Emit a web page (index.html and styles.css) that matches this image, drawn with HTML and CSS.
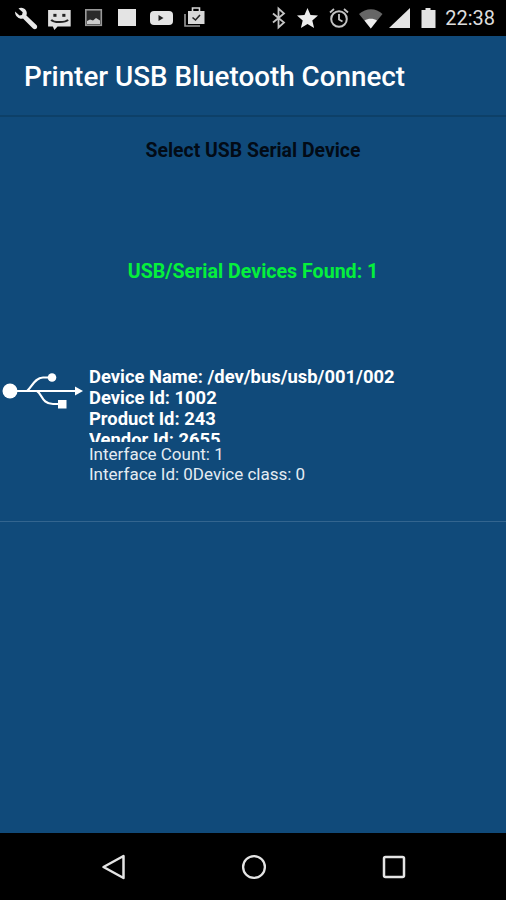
FILE: index.html
```html
<!DOCTYPE html>
<html lang="en">
<head>
    <meta charset="UTF-8">
    <meta name="viewport" content="width=device-width, initial-scale=1.0">
    <title>Printer USB Bluetooth Connect</title>
    <link rel="stylesheet" href="styles.css">
</head>
<body>
    <div class="status-bar">
        <!-- notification icons -->
        <svg class="icon" width="192" height="36" viewBox="14 0 192 36">
            <path transform="translate(12 6)" d="M3 5.500l4.500 4 2.500-.6.7-2.600L6.500 2.500C9 1 12.500 2 14 4.500c1 1.700 1 3.500.4 5l10 9.500c1 1 1 2.500.1 3.500s-2.500 1-3.500 0l-10-10c-1.800.6-3.800.2-5.300-1.200C4 10.300 3 8 3 5.500z" fill="#e8e8e8"/>
            <g transform="translate(46 7) scale(1.05 .98)">
                <path d="M2 3h21.500v17H11L8 23.500 6.500 20H2z" fill="#e0e0e0"/>
                <rect x="7" y="7" width="3" height="3" fill="#222"/>
                <rect x="15.500" y="7" width="3" height="3" fill="#222"/>
                <path d="M5 13c2 3.200 13.500 3.200 16 0" stroke="#222" stroke-width="2" fill="none"/>
            </g>
            <rect x="85.800" y="9.800" width="15.500" height="15.500" fill="#2a2a2a" stroke="#999" stroke-width="1.600"/>
            <path d="M87 23v-2l3-1.500 3 1 3-2.500 4 2.500V24H87z" fill="#ccc"/>
            <rect x="118" y="9" width="18" height="17" fill="#e4e4e4"/>
            <rect x="150" y="11" width="23" height="14" rx="4" fill="#e4e4e4"/>
            <path d="M158.500 15l5 3-5 3z" fill="#222"/>
            <path d="M185 14v12h15" stroke="#999" stroke-width="1.600" fill="none"/>
            <rect x="188" y="11" width="16.500" height="13" fill="#d8d8d8"/>
            <path d="M192.500 11V8h7v3" stroke="#d8d8d8" stroke-width="1.600" fill="none"/>
            <path d="M192.500 17.500l3 2.500 4.500-5" stroke="#222" stroke-width="1.600" fill="none"/>
        </svg>
        <div class="status-right">
            <!-- system icons -->
            <svg class="icon" width="166" height="36" viewBox="272 0 166 36">
                <path d="M274 13.500l11 9-5.500 5V8.500l5.500 5-11 9" stroke="#c4c4c4" stroke-width="1.800" fill="none"/>
                <path d="M308.500 8l3 7 7.500.6-5.700 4.900 1.800 7.500-6.600-4-6.600 4 1.800-7.500-5.700-4.900 7.500-.6z" fill="#eee"/>
                <circle cx="340" cy="19" r="7.800" fill="none" stroke="#c4c4c4" stroke-width="2"/>
                <path d="M340 14v5.500l3.500 2M331 12.500l4-3.500M349 12.500l-4-3.500" stroke="#c4c4c4" stroke-width="1.800" fill="none"/>
                <path d="M360 14c7-6.500 17-6.500 23.500 0l-11.700 14.500z" fill="#666"/>
                <path d="M365.500 20.500c3.500-2.500 9-2.500 12.500 0l-6.200 8z" fill="#eee"/>
                <path d="M411 8v20h-21z" fill="#e4e4e4"/>
                <path d="M426.500 8h5v2h5v18h-14V10h4z" fill="#e4e4e4"/>
            </svg>
            <span class="clock">22:38</span>
        </div>
    </div>

    <div class="app-bar">Printer USB Bluetooth Connect</div>

    <div class="content">
        <div class="select-title">Select USB Serial Device</div>
        <div class="found">USB/Serial Devices Found: 1</div>
        <div class="device">
            <svg class="usb-icon" width="84" height="44" viewBox="0 0 84 44">
                <circle cx="10" cy="22" r="7.500" fill="#fff"/>
                <path d="M14 22h63" stroke="#fff" stroke-width="2.200"/>
                <path d="M83 22l-8-4.500v9z" fill="#fff"/>
                <path d="M27 22C32 18 35 8.500 43 8.500h8M37 22C42 25 42 35 53 35h6" stroke="#fff" stroke-width="2.200" fill="none"/>
                <circle cx="52" cy="8.500" r="4.300" fill="#fff"/>
                <rect x="58" y="31" width="8.500" height="8.500" fill="#fff"/>
            </svg>
            <div class="device-info">
                <div class="device-main">
                    <div>Device Name: /dev/bus/usb/001/002</div>
                    <div>Device Id: 1002</div>
                    <div>Product Id: 243</div>
                    <div>Vendor Id: 2655</div>
                </div>
                <div class="device-sub">
                    <div>Interface Count: 1</div>
                    <div>Interface Id: 0Device class: 0</div>
                </div>
            </div>
        </div>
    </div>

    <div class="nav-bar">
        <svg width="26" height="28" viewBox="0 0 26 28"><path d="M23.500 3v22L3.500 14z" fill="none" stroke="#e4e4e4" stroke-width="2.500" stroke-linejoin="round"/></svg>
        <svg width="26" height="26" viewBox="0 0 26 26"><circle cx="13" cy="13" r="10.900" fill="none" stroke="#e4e4e4" stroke-width="2.300"/></svg>
        <svg width="24" height="24" viewBox="0 0 24 24"><rect x="2" y="2" width="20" height="20" rx="1.500" fill="none" stroke="#e4e4e4" stroke-width="2.500"/></svg>
    </div>
</body>
</html>
```

FILE: styles.css
```css
body {
    margin: 0;
    width: 506px;
    height: 900px;
    display: flex;
    flex-direction: column;
    background-color: #104a7a;
    font-family: Roboto, sans-serif;
    overflow: hidden;
}
.status-bar {
    height: 36px;
    background-color: #000;
    display: flex;
    justify-content: space-between;
    align-items: center;
    padding: 0 11px 0 14px;
}
.status-right {
    display: flex;
    align-items: center;
    gap: 8px;
}
.icon {
    display: block;
}
.clock {
    color: #ddd;
    font-size: 20px;
}
.app-bar {
    height: 77px;
    padding-top: 2px;
    display: flex;
    align-items: center;
    padding-left: 24px;
    color: #fff;
    font-size: 27.8px;
    font-weight: 500;
    border-bottom: 2px solid #0d4068;
}
.content {
    flex: 1;
}
.select-title {
    margin-top: 22px;
    line-height: 24px;
    text-align: center;
    font-size: 19.4px;
    font-weight: 700;
    color: #020b16;
}
.found {
    margin-top: 97px;
    line-height: 24px;
    text-align: center;
    font-size: 19.6px;
    font-weight: 700;
    color: #05f03c;
}
.device {
    margin-top: 82px;
    height: 155px;
    display: flex;
    align-items: flex-start;
    border-bottom: 1px solid #33658f;
}
.usb-icon {
    display: block;
    margin: 3px 5px 0 0;
}
.device-main {
    height: 76px;
    margin-bottom: 2px;
    overflow: hidden;
    font-size: 18.4px;
    font-weight: 700;
    line-height: 21px;
    color: #fff;
}
.device-sub {
    font-size: 17px;
    line-height: 20px;
    color: #e4ecf2;
}
.nav-bar {
    height: 67px;
    background-color: #000;
    display: flex;
    justify-content: space-between;
    align-items: center;
    padding: 0 100px;
}
```
